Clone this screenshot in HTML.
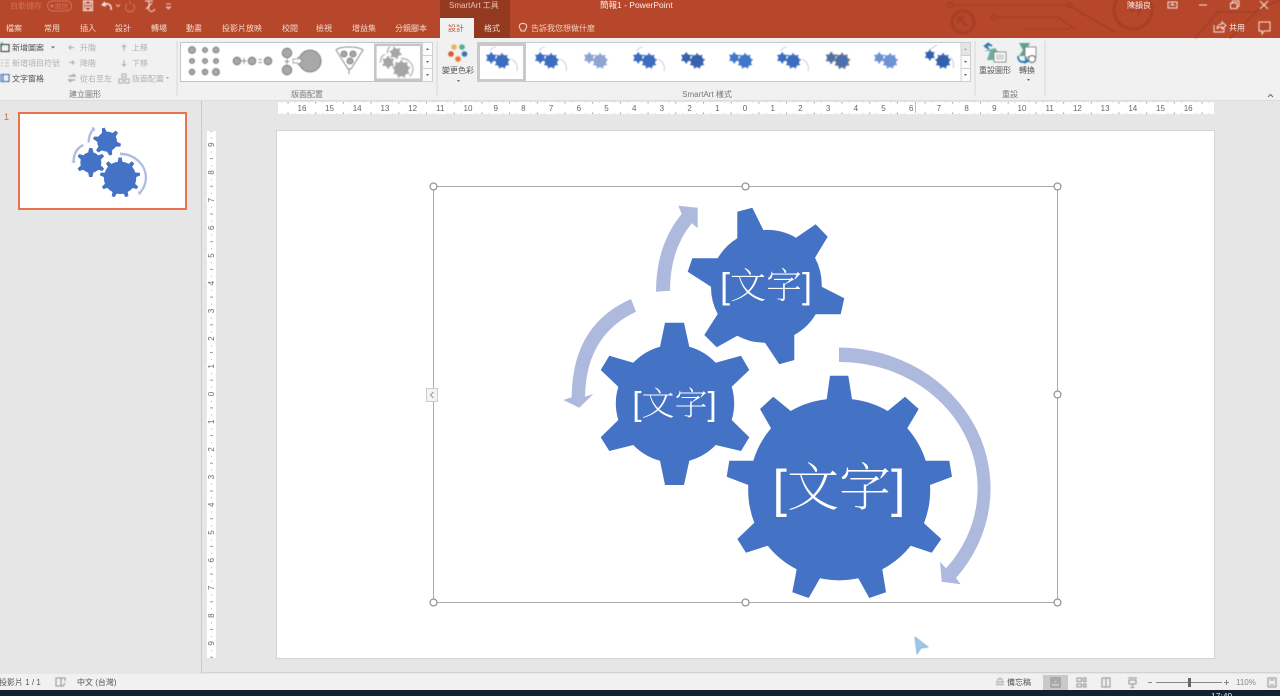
<!DOCTYPE html>
<html lang="zh-Hant">
<head>
<meta charset="utf-8">
<title>簡報1 - PowerPoint</title>
<style>
html,body{margin:0;padding:0;width:1280px;height:696px;overflow:hidden;background:#e6e6e6}
svg{display:block;position:absolute;left:0;top:0}
text{font-family:"Liberation Sans","Noto Sans CJK TC",sans-serif;font-size:8px;fill:#555;filter:blur(.3px)}
.tab{fill:#f3d9d0;text-anchor:middle}
.dis{fill:#b2b2b2}
.lab{fill:#777;text-anchor:middle}
.hr{font-size:8px;fill:#666;text-anchor:middle}
text.big{font-family:"Liberation Sans","Noto Serif CJK SC","Noto Sans CJK TC",serif;font-weight:200;fill:#fff;text-anchor:middle;filter:none}
.soft{filter:blur(.45px)}
</style>
</head>
<body>
<svg width="1280" height="696" viewBox="0 0 1280 696" xmlns="http://www.w3.org/2000/svg">
<defs>
<path id="g1" d="M737.3,238.3 L737.3,211.7 L752.3,207.7 L763.3,230 A57,57 0 0 1 796,237.7 L815.7,224.3 L827.7,236.7 L815,257.7 A57,57 0 0 1 821.7,286.7 L844.3,298.3 L840.7,314.3 L815.7,314.3 A57,57 0 0 1 794.3,335 L794.3,360 L779.3,364.3 L765,342.7 A57,57 0 0 1 737.3,335.7 L716.7,347.3 L704.3,335 L717.7,314 A57,57 0 0 1 711,286.7 L687.7,271.7 L692.3,258.3 L717.7,258.3 A57,57 0 0 1 737.3,238.3 Z"/>
<path id="g2" d="M660,346.7 L665,322.7 L684,322.7 L689.3,346.7 A58,58 0 0 1 715.7,362.7 L741,355.7 L749.3,370 L731.7,386.7 A58,58 0 0 1 731.7,420 L749.3,437.3 L741,451 L715.7,445 A58,58 0 0 1 689.3,460.7 L684,485 L665,485 L660,460.7 A58,58 0 0 1 633.3,445 L609.3,451 L600.7,437.3 L618.3,420 A58,58 0 0 1 618.3,386.7 L600.7,370 L609.3,355.7 L633.3,362.7 A58,58 0 0 1 660,346.7 Z"/>
<path id="g3" d="M826.7,399.3 L830,375.7 L848.3,375.7 L852,399.3 A91,91 0 0 1 887.7,411 L905,396.7 L918.7,409 L907.3,428.3 A91,91 0 0 1 925.7,460.7 L949.3,460.7 L952,476.7 L930,485 A91,91 0 0 1 924,523.3 L941.3,539 L931.7,552.7 L910.7,545.7 A91,91 0 0 1 882.3,569.3 L886,592.3 L869.3,598 L858.3,578.3 A91,91 0 0 1 820,578.3 L808.7,598 L792.3,592.3 L796.7,569.3 A91,91 0 0 1 767.7,545.7 L746,552.7 L737.3,539 L754.3,522.7 A91,91 0 0 1 748.3,485 L726.7,476.7 L729.3,460.7 L753.3,460.7 A91,91 0 0 1 771,428.3 L760,409 L773.3,396.7 L790.7,411 A91,91 0 0 1 826.7,399.3 Z"/>
<path id="a1" d="M839,347.5 A152,141 0 0 1 956,578 L960.7,584.3 L941.7,581.7 L940,561.7 L946,568.3 A138,126 0 0 0 839,362 Z"/>
<path id="a2" d="M656,291.7 Q656,245 681.7,214 L678.3,205.7 L697.7,207.7 L697.7,228.3 L691.7,223.3 Q670,250 670,290.7 Z"/>
<path id="a3" d="M631,299 Q572,325 571.7,397.3 L563.3,400 L579.3,407.7 L593.3,394 L585,396.7 Q586,335 636,311.7 Z"/>
<pattern id="rh" x="745" y="0" width="27.7" height="12" patternUnits="userSpaceOnUse">
<rect x="6.7" y="5.5" width="1" height="1" fill="#aaa"/>
<rect x="13.4" y="4.500" width="1" height="3" fill="#999"/>
<rect x="20.4" y="5.5" width="1" height="1" fill="#aaa"/>
</pattern>
<pattern id="rv" x="0" y="394" width="12" height="27.7" patternUnits="userSpaceOnUse">
<rect x="4.5" y="6.7" width="1" height="1" fill="#aaa"/>
<rect x="3.500" y="13.4" width="3" height="1" fill="#999"/>
<rect x="4.5" y="20.4" width="1" height="1" fill="#aaa"/>
</pattern>
</defs>

<!-- backgrounds -->
<rect width="1280" height="696" fill="#e6e6e6"/>
<rect width="1280" height="38" fill="#b7472a"/>
<rect x="440" y="0" width="70" height="38" fill="#93391f"/>
<rect x="440" y="18" width="34" height="20" fill="#f1f1f1"/>
<rect y="38" width="1280" height="62" fill="#f1f1f1"/>
<rect y="100" width="1280" height="1" fill="#dcdcdc"/>

<!-- circuit decoration -->
<g fill="none" stroke="#a53f25" stroke-width="1.6" class="soft">
<path d="M953,5 H1068 L1115,32"/>
<circle cx="950" cy="5" r="2.5"/>
<circle cx="1069" cy="5" r="2.5"/>
<circle cx="963" cy="22" r="11" stroke-width="3"/>
<path d="M958,17 L967,26 M958,17 H964 M958,17 V23" stroke-width="2.5"/>
<circle cx="1133" cy="10" r="19" stroke-width="3"/>
<path d="M1127,4 L1133,12 M1139,2 V14" stroke-width="3"/>
<path d="M996,17 H1058 L1075,29"/>
<circle cx="994" cy="17" r="2.5"/>
<path d="M1025,29 H1070"/>
<path d="M1195,38 L1218,12 H1255 L1280,0"/>
<path d="M1230,38 L1260,8"/>
</g>

<!-- QAT -->
<text x="10" y="8.500" style="fill:#cf6f55">自動儲存</text>
<rect x="47.5" y="1" width="24" height="10" rx="5" fill="none" stroke="#cf6f55"/>
<circle cx="52" cy="6" r="1.6" fill="#cf6f55"/>
<text x="55" y="8.500" style="fill:#cf6f55;font-size:6.5px">關閉</text>
<g fill="none" stroke="#f4e4de" stroke-width="1.2" class="soft">
<path d="M83.5,1 H92.5 V10.5 H83.5 Z M85.5,1 V4.5 H90.5 V1 M85.5,10.5 V7 H90.5 V10.5"/>
<path d="M105,2 L102.5,5 L106,6 M103,5 C107,2.5 112,4 111,10" stroke-width="1.6"/>
<path d="M116,4.5 l2,2 l2,-2" stroke-width="0.8"/>
<path d="M127,4 A4.5,4.5 0 1 0 133,4 M130,1 V4" stroke="#cf6f55"/>
<path d="M145,1 H153 M149,1 V8 M146,9 L152,3" stroke-width="1"/>
<path d="M148,8 C150,13 153,12 155,9" stroke-width="1"/>
<path d="M166,4 H171 M166.5,7 H170.5 L168.5,9 Z" stroke-width="0.8"/>
</g>

<!-- title -->
<text x="449" y="8" style="fill:#e9c4b8">SmartArt 工具</text>
<text x="600" y="8" style="fill:#fbeee9;font-size:8.5px">簡報1  -  PowerPoint</text>
<text x="1127" y="8" style="fill:#f7e9e4">陳韻良</text>
<g fill="none" stroke="#f4e4de" stroke-width="1" class="soft">
<rect x="1168" y="2" width="9" height="6"/><path d="M1170,5 H1175 M1172.5,2 V5"/>
<path d="M1199,5 H1207"/>
<path d="M1230.5,3 H1237 V8.5 H1230.5 Z M1232.5,3 V1 H1239 V6.5 H1237"/>
<path d="M1260,1 L1268,9 M1268,1 L1260,9"/>
<path d="M1214,25 V32 H1224 V28 M1217,29 C1217,25 1220,24 1222,24 V22 L1226,25.5 L1222,29 V27 C1220,27 1218,27.5 1217,29" />
<path d="M1259,22 H1270 V31 H1264 L1262,34 V31 H1259 Z"/>
</g>
<text x="1229" y="30.5" style="fill:#f7e9e4">共用</text>

<!-- tabs -->
<text class="tab" x="14" y="31">檔案</text>
<text class="tab" x="52" y="31">常用</text>
<text class="tab" x="88" y="31">插入</text>
<text class="tab" x="123" y="31">設計</text>
<text class="tab" x="159" y="31">轉場</text>
<text class="tab" x="194" y="31">動畫</text>
<text class="tab" x="242" y="31">投影片放映</text>
<text class="tab" x="290" y="31">校閱</text>
<text class="tab" x="324" y="31">檢視</text>
<text class="tab" x="364" y="31">增益集</text>
<text class="tab" x="411" y="31">分鏡腳本</text>
<text class="tab" x="456" y="31" style="fill:#c2583c">設計</text>
<text class="tab" x="492" y="31">格式</text>
<g fill="none" stroke="#f3d9d0" stroke-width="1"><path d="M521,31 V29.5 C518,27 519,23.5 523,23.5 C527,23.5 528,27 525,29.5 V31 Z"/></g>
<text x="531" y="31" style="fill:#f0cdc1">告訴我您想做什麼</text>

<!-- Create graphic group -->
<g fill="none" stroke-width="1" class="soft">
<rect x="1" y="44.5" width="8" height="7" stroke="#333"/><path d="M2,42 V46 M0,44 H4" stroke="#3a9a6a"/>
<path d="M1,60 H3 M1,63 H3 M1,66 H3 M5,60 H9 M5,63 H9 M5,66 H9" stroke="#bbb"/>
<rect x="1" y="74.5" width="8" height="7" stroke="#2f6db5"/><path d="M3,75 V81" stroke="#2f6db5"/>
<path d="M74,47.5 H69 M71,45.5 L69,47.5 L71,49.5" stroke="#aaa"/>
<path d="M69,62.5 H74 M72,60.5 L74,62.5 L72,64.5" stroke="#aaa"/>
<path d="M69,76 H75 L73,74 M75,80 H69 L71,82" stroke="#999" stroke-width="1.2"/>
<path d="M124,51 V45 M122,47 L124,45 L126,47" stroke="#aaa"/>
<path d="M124,60 V66 M122,64 L124,66 L126,64" stroke="#aaa"/>
<path d="M122,74 H126 V77 H122 Z M119,79 H123 V83 H119 Z M125,79 H129 V83 H125 Z" stroke="#aaa"/>
</g>
<text x="12" y="50.5">新增圖案</text>
<path d="M51,46.5 l2,2 l2,-2 Z" fill="#666"/>
<text x="12" y="66" class="dis">新增項目符號</text>
<text x="12" y="81.5">文字窗格</text>
<text x="80" y="50.5" class="dis">升階</text>
<text x="80" y="66" class="dis">降階</text>
<text x="80" y="81.5" class="dis">從右至左</text>
<text x="132" y="50.5" class="dis">上移</text>
<text x="132" y="66" class="dis">下移</text>
<text x="132" y="81.5" class="dis">版面配置</text>
<path d="M166,77 l1.5,2 l1.5,-2 Z" fill="#aaa"/>
<text class="lab" x="85" y="97">建立圖形</text>

<path d="M177,41 V96 M437,41 V96 M975,41 V96 M1045,41 V96" stroke="#d8d8d8"/>

<!-- layout gallery -->
<rect x="180.500" y="42.500" width="252" height="39" fill="#fff" stroke="#c4c4c4"/>
<g class="soft">
<g fill="#a8a8a8" stroke="#6e6e6e" stroke-width="0.8">
<circle cx="192" cy="50" r="3.5"/><circle cx="205" cy="50" r="2.5"/><circle cx="216" cy="50" r="3"/>
<circle cx="192" cy="61" r="2.5"/><circle cx="205" cy="61" r="2.500"/><circle cx="216" cy="61" r="2.500"/>
<circle cx="192" cy="72" r="2.8"/><circle cx="205" cy="72" r="2.800"/><circle cx="216" cy="72" r="3.500"/>
<circle cx="237" cy="61" r="3.800"/><circle cx="252" cy="61" r="3.800"/><circle cx="268" cy="61" r="3.800"/>
<circle cx="287" cy="53" r="4.800"/><circle cx="287" cy="70" r="4.800"/><circle cx="310" cy="61" r="11"/>
<circle cx="344" cy="54" r="3"/><circle cx="353" cy="54" r="3"/><circle cx="350" cy="61" r="3"/>
</g>
<path d="M336,50 C340,46 358,46 363,50 L351,69 H348 Z M349,69 V74" fill="none" stroke="#8a8a8a"/>
<path d="M244,58 V64 M241,61 H247 M258.500,59.500 H262 M258.500,62.500 H262 M287,59 V64 M284.500,61.500 H289.500" stroke="#777" stroke-width="0.8"/>
<path d="M293,59 H298 V57 L302,61 L298,65 V63 H293 Z" fill="#fff" stroke="#8a8a8a" stroke-width="0.7"/>
</g>
<rect x="375.300" y="44.800" width="46" height="35" fill="#fff" stroke="#c6c6c6" stroke-width="2.600"/>
<g fill="#a5a5a5" class="soft">
<use href="#g1" transform="translate(379,46) scale(.08) translate(-560,-200)"/>
<use href="#g2" transform="translate(379,46) scale(.08) translate(-560,-200)"/>
<use href="#g3" transform="translate(379,46) scale(.08) translate(-560,-200)"/>
<use href="#a2" transform="translate(379,46) scale(.08) translate(-560,-200)"/>
<use href="#a3" transform="translate(379,46) scale(.08) translate(-560,-200)"/>
<use href="#a1" transform="translate(379,46) scale(.08) translate(-560,-200)"/>
</g>
<rect x="422.500" y="42.500" width="10" height="13" fill="#fbfbfb" stroke="#d0d0d0"/>
<rect x="422.500" y="55.500" width="10" height="13" fill="#fbfbfb" stroke="#d0d0d0"/>
<rect x="422.500" y="68.500" width="10" height="13" fill="#fbfbfb" stroke="#d0d0d0"/>
<path d="M426,50 l1.500,-2 l1.500,2 Z M426,61 l1.500,2 l1.500,-2 Z M426,74 l1.500,2 l1.500,-2 Z" fill="#666"/>
<text class="lab" x="307" y="97">版面配置</text>

<!-- change colors -->
<g class="soft">
<circle cx="454" cy="47" r="2.800" fill="#eeb25f"/><circle cx="462" cy="47" r="2.800" fill="#5eab8b"/>
<circle cx="451" cy="54" r="2.800" fill="#d9582e"/><circle cx="464.500" cy="54" r="2.800" fill="#3b75b0"/>
<circle cx="458" cy="59" r="2.800" fill="#ec7a2c"/>
</g>
<text x="458" y="73" style="text-anchor:middle">變更色彩</text>
<path d="M457,80 l1.500,2 l1.500,-2 Z" fill="#666"/>

<!-- style gallery -->
<rect x="477.500" y="42.500" width="493" height="39" fill="#fff" stroke="#c8c8c8"/>
<rect x="478.500" y="44.500" width="46" height="36" fill="#fff" stroke="#c9c9c9" stroke-width="3"/>
<g fill="#3d6dbf" class="soft">
<g transform="translate(486,52) scale(.07) translate(-600,-320)"><use href="#g2"/><use href="#g3" transform="translate(-10,-40) "/></g>
<g transform="translate(535,52) scale(.07) translate(-600,-320)"><use href="#g2"/><use href="#g3" transform="translate(-10,-40) "/></g>
<g transform="translate(584,52) scale(.07) translate(-600,-320)" fill="#8ea4d5"><use href="#g2"/><use href="#g3" transform="translate(-10,-40) "/></g>
<g transform="translate(633,52) scale(.07) translate(-600,-320)"><use href="#g2"/><use href="#g3" transform="translate(-10,-40) "/></g>
<g transform="translate(681,52) scale(.07) translate(-600,-320)" fill="#3862ad"><use href="#g2"/><use href="#g3" transform="translate(-10,-40) "/></g>
<g transform="translate(729,52) scale(.07) translate(-600,-320)" fill="#4077c9"><use href="#g2"/><use href="#g3" transform="translate(-10,-40) "/></g>
<g transform="translate(777,52) scale(.07) translate(-600,-320)" fill="#3d6dbf"><use href="#g2"/><use href="#g3" transform="translate(-10,-40) "/></g>
<g transform="translate(826,52) scale(.07) translate(-600,-320)" fill="#4a6fae" stroke="#8a8a8a" stroke-width="10"><use href="#g2"/><use href="#g3" transform="translate(-10,-40) "/></g>
<g transform="translate(874,52) scale(.07) translate(-600,-320)" fill="#6f92d6"><use href="#g2"/><use href="#g3" transform="translate(-10,-40) "/></g>
<g transform="translate(927,52) scale(.07) translate(-600,-320)" fill="#3361ae"><use href="#g2" transform="translate(0,-20) scale(.95)"/><use href="#g3" transform="translate(-10,-40) "/></g>
</g>
<g fill="none" stroke="#b3bfdf" stroke-width="0.8" class="soft">
<path d="M490,51 A7,7 0 0 1 496,47 M511,59 A10,10 0 0 1 517,71"/>
<path d="M539,51 A7,7 0 0 1 545,47 M560,59 A10,10 0 0 1 566,71"/>
<path d="M637,51 A7,7 0 0 1 643,47 M658,59 A10,10 0 0 1 664,71"/>
<path d="M781,51 A7,7 0 0 1 787,47 M802,59 A10,10 0 0 1 808,71"/>
<path d="M929,50 L937,45 M950,57 A10,10 0 0 1 953,68"/>
</g>
<rect x="961" y="42.500" width="9.500" height="13" fill="#e4e4e4" stroke="#d0d0d0"/>
<rect x="961" y="55.500" width="9.500" height="13" fill="#fbfbfb" stroke="#d0d0d0"/>
<rect x="961" y="68.500" width="9.500" height="13" fill="#fbfbfb" stroke="#d0d0d0"/>
<path d="M964,50 l1.500,-2 l1.500,2 Z" fill="#aaa"/><path d="M964,61 l1.500,2 l1.500,-2 Z M964,74 l1.500,2 l1.500,-2 Z" fill="#666"/>
<text class="lab" x="707" y="97">SmartArt 樣式</text>

<!-- reset group -->
<g class="soft">
<path d="M990,51 L984,51 L995,48 L1005,60 H987 Z" fill="#6fae9d"/>
<rect x="994" y="52" width="12" height="10" fill="#fff" stroke="#777" stroke-width="0.8"/>
<path d="M996,55 H1004 M996,57 H1004 M996,59 H1004" stroke="#999" stroke-width="0.7"/>
<path d="M992,46 C988,43 986,46 986,48 M989,43 L985,46 L989,49" fill="none" stroke="#2b78b8" stroke-width="2"/>
<path d="M1019,43 H1030 L1026,50 H1031 L1027,56 H1019 L1023,50 Z" fill="#5ea38e"/>
<rect x="1025" y="47" width="11" height="10" fill="#fff" stroke="#777" stroke-width="0.8"/>
<circle cx="1032" cy="59" r="3.500" fill="#fff" stroke="#666"/>
<path d="M1018,56 C1018,62 1022,63 1027,61 M1025,58 L1028,61 L1024,63" fill="none" stroke="#2b78b8" stroke-width="1.800"/>
</g>
<text x="995" y="73" style="text-anchor:middle">重設圖形</text>
<text x="1027" y="73" style="text-anchor:middle">轉換</text>
<path d="M1027,79 l1.500,2 l1.500,-2 Z" fill="#666"/>
<text class="lab" x="1010" y="97">重設</text>
<path d="M1268,97 L1270.500,94.500 L1273,97" fill="none" stroke="#666"/>

<!-- panes -->
<rect x="201" y="101" width="1" height="572" fill="#c9c9c9"/>
<rect x="202" y="672" width="1078" height="1" fill="#d2d2d2"/>
<text x="4" y="120" style="fill:#d8623f;font-size:9px">1</text>
<rect x="19" y="113" width="167" height="96" fill="#fff" stroke="#e8744f" stroke-width="2"/>
<g transform="translate(20,114) scale(.178) translate(-277,-131)" class="soft">
<g fill="#b0bde0"><use href="#a1"/><use href="#a2"/><use href="#a3"/></g>
<g fill="#4472c4"><use href="#g1"/><use href="#g2"/><use href="#g3"/></g>
</g>

<!-- rulers -->
<rect x="278" y="102" width="936" height="12" fill="#fff"/>
<rect x="278" y="102" width="936" height="12" fill="url(#rh)"/>
<g>
<rect x="915" y="102" width="1" height="11" fill="#bbb"/>
<text class="hr" x="302" y="111" paint-order="stroke" stroke="#fff" stroke-width="3">16</text>
<text class="hr" x="329.500" y="111" paint-order="stroke" stroke="#fff" stroke-width="3">15</text>
<text class="hr" x="357.200" y="111" paint-order="stroke" stroke="#fff" stroke-width="3">14</text>
<text class="hr" x="384.900" y="111" paint-order="stroke" stroke="#fff" stroke-width="3">13</text>
<text class="hr" x="412.600" y="111" paint-order="stroke" stroke="#fff" stroke-width="3">12</text>
<text class="hr" x="440.300" y="111" paint-order="stroke" stroke="#fff" stroke-width="3">11</text>
<text class="hr" x="468" y="111" paint-order="stroke" stroke="#fff" stroke-width="3">10</text>
<text class="hr" x="495.700" y="111" paint-order="stroke" stroke="#fff" stroke-width="3">9</text>
<text class="hr" x="523.400" y="111" paint-order="stroke" stroke="#fff" stroke-width="3">8</text>
<text class="hr" x="551.100" y="111" paint-order="stroke" stroke="#fff" stroke-width="3">7</text>
<text class="hr" x="578.800" y="111" paint-order="stroke" stroke="#fff" stroke-width="3">6</text>
<text class="hr" x="606.500" y="111" paint-order="stroke" stroke="#fff" stroke-width="3">5</text>
<text class="hr" x="634.200" y="111" paint-order="stroke" stroke="#fff" stroke-width="3">4</text>
<text class="hr" x="661.900" y="111" paint-order="stroke" stroke="#fff" stroke-width="3">3</text>
<text class="hr" x="689.600" y="111" paint-order="stroke" stroke="#fff" stroke-width="3">2</text>
<text class="hr" x="717.300" y="111" paint-order="stroke" stroke="#fff" stroke-width="3">1</text>
<text class="hr" x="745" y="111" paint-order="stroke" stroke="#fff" stroke-width="3">0</text>
<text class="hr" x="772.700" y="111" paint-order="stroke" stroke="#fff" stroke-width="3">1</text>
<text class="hr" x="800.400" y="111" paint-order="stroke" stroke="#fff" stroke-width="3">2</text>
<text class="hr" x="828.100" y="111" paint-order="stroke" stroke="#fff" stroke-width="3">3</text>
<text class="hr" x="855.800" y="111" paint-order="stroke" stroke="#fff" stroke-width="3">4</text>
<text class="hr" x="883.500" y="111" paint-order="stroke" stroke="#fff" stroke-width="3">5</text>
<text class="hr" x="911.200" y="111" paint-order="stroke" stroke="#fff" stroke-width="3">6</text>
<text class="hr" x="938.900" y="111" paint-order="stroke" stroke="#fff" stroke-width="3">7</text>
<text class="hr" x="966.600" y="111" paint-order="stroke" stroke="#fff" stroke-width="3">8</text>
<text class="hr" x="994.300" y="111" paint-order="stroke" stroke="#fff" stroke-width="3">9</text>
<text class="hr" x="1022" y="111" paint-order="stroke" stroke="#fff" stroke-width="3">10</text>
<text class="hr" x="1049.700" y="111" paint-order="stroke" stroke="#fff" stroke-width="3">11</text>
<text class="hr" x="1077.400" y="111" paint-order="stroke" stroke="#fff" stroke-width="3">12</text>
<text class="hr" x="1105.100" y="111" paint-order="stroke" stroke="#fff" stroke-width="3">13</text>
<text class="hr" x="1132.800" y="111" paint-order="stroke" stroke="#fff" stroke-width="3">14</text>
<text class="hr" x="1160.500" y="111" paint-order="stroke" stroke="#fff" stroke-width="3">15</text>
<text class="hr" x="1188.200" y="111" paint-order="stroke" stroke="#fff" stroke-width="3">16</text>
</g>
<rect x="207" y="131" width="9" height="527" fill="#fff"/>
<g transform="translate(206.500,0)"><rect x="0" y="131" width="10" height="527" fill="url(#rv)"/></g>
<g>
<text class="hr" transform="translate(214,144.700) rotate(-90)" paint-order="stroke" stroke="#fff" stroke-width="3">9</text>
<text class="hr" transform="translate(214,172.400) rotate(-90)" paint-order="stroke" stroke="#fff" stroke-width="3">8</text>
<text class="hr" transform="translate(214,200.100) rotate(-90)" paint-order="stroke" stroke="#fff" stroke-width="3">7</text>
<text class="hr" transform="translate(214,227.800) rotate(-90)" paint-order="stroke" stroke="#fff" stroke-width="3">6</text>
<text class="hr" transform="translate(214,255.500) rotate(-90)" paint-order="stroke" stroke="#fff" stroke-width="3">5</text>
<text class="hr" transform="translate(214,283.200) rotate(-90)" paint-order="stroke" stroke="#fff" stroke-width="3">4</text>
<text class="hr" transform="translate(214,310.900) rotate(-90)" paint-order="stroke" stroke="#fff" stroke-width="3">3</text>
<text class="hr" transform="translate(214,338.600) rotate(-90)" paint-order="stroke" stroke="#fff" stroke-width="3">2</text>
<text class="hr" transform="translate(214,366.300) rotate(-90)" paint-order="stroke" stroke="#fff" stroke-width="3">1</text>
<text class="hr" transform="translate(214,394) rotate(-90)" paint-order="stroke" stroke="#fff" stroke-width="3">0</text>
<text class="hr" transform="translate(214,421.700) rotate(-90)" paint-order="stroke" stroke="#fff" stroke-width="3">1</text>
<text class="hr" transform="translate(214,449.400) rotate(-90)" paint-order="stroke" stroke="#fff" stroke-width="3">2</text>
<text class="hr" transform="translate(214,477.100) rotate(-90)" paint-order="stroke" stroke="#fff" stroke-width="3">3</text>
<text class="hr" transform="translate(214,504.800) rotate(-90)" paint-order="stroke" stroke="#fff" stroke-width="3">4</text>
<text class="hr" transform="translate(214,532.500) rotate(-90)" paint-order="stroke" stroke="#fff" stroke-width="3">5</text>
<text class="hr" transform="translate(214,560.200) rotate(-90)" paint-order="stroke" stroke="#fff" stroke-width="3">6</text>
<text class="hr" transform="translate(214,587.900) rotate(-90)" paint-order="stroke" stroke="#fff" stroke-width="3">7</text>
<text class="hr" transform="translate(214,615.600) rotate(-90)" paint-order="stroke" stroke="#fff" stroke-width="3">8</text>
<text class="hr" transform="translate(214,643.300) rotate(-90)" paint-order="stroke" stroke="#fff" stroke-width="3">9</text>
</g>

<!-- slide -->
<rect x="276.500" y="130.500" width="938" height="528" fill="#fff" stroke="#d4d4d4"/>
<g fill="#aebadd"><use href="#a1"/><use href="#a2"/><use href="#a3"/></g>
<g fill="#4472c4"><use href="#g1"/><use href="#g2"/><use href="#g3"/></g>
<text class="big" x="766" y="298" style="font-size:36px">[文字]</text>
<text class="big" x="674.500" y="415" style="font-size:33px">[文字]</text>
<text class="big" x="839" y="506" style="font-size:52px">[文字]</text>

<!-- selection frame -->
<rect x="433.500" y="186.500" width="624" height="416" fill="none" stroke="#aaa"/>
<g fill="#fff" stroke="#808080">
<circle cx="433.500" cy="186.500" r="3.500"/><circle cx="745.500" cy="186.500" r="3.500"/><circle cx="1057.500" cy="186.500" r="3.500"/>
<circle cx="1057.500" cy="394.500" r="3.500"/><circle cx="433.500" cy="602.500" r="3.500"/>
<circle cx="745.500" cy="602.500" r="3.500"/><circle cx="1057.500" cy="602.500" r="3.500"/>
</g>
<rect x="426.500" y="388.500" width="11" height="13" fill="#f4f4f4" stroke="#ccc"/>
<path d="M433.500,392 L430.500,395 L433.500,398" fill="none" stroke="#999"/>
<path d="M915,637 L928,647 L921,648 L917,654 Z" fill="#9cc8e8" stroke="#6ea6d2" stroke-width="0.7" class="soft"/>

<!-- status bar -->
<rect y="674" width="1280" height="16" fill="#f1f1f1"/>
<rect y="690" width="1280" height="6" fill="#14222f"/>
<text x="-1" y="685">投影片 1 / 1</text>
<rect x="1043" y="675" width="25" height="15" fill="#c9c9c9"/>
<g fill="none" stroke="#777" stroke-width="0.8" class="soft">
<path d="M56,678 H61 V686 H56 Z M61,678 H65 V681 M61,686 H63 L65,683"/>
<path d="M996,682 H1004 M996,684.500 H1004 M997,680.500 L1000,678 L1003,680.500"/>
<rect x="1051" y="678" width="9" height="9"/><path d="M1053,680 H1058 V683 H1053 Z"/>
<path d="M1077,678 H1081.500 V681.500 H1077 Z M1083.500,678 H1086 V681.500 H1083.500 Z M1077,684 H1081.500 V687 H1077 Z M1083.500,684 H1086 V687 H1083.500 Z"/>
<path d="M1102,678 H1106 V687 H1102 Z M1106,678 H1110 V687 H1106 Z"/>
<path d="M1128,678 H1137 M1129,680 H1136 V684 H1129 Z M1132.500,684 V687 M1130.500,687.500 H1134.500"/>
<path d="M1268,678 H1276 V687 H1268 Z M1270,680 H1274 M1270,685 H1274"/>
</g>
<text x="77" y="685">中文 (台灣)</text>
<text x="1007" y="685">備忘稿</text>
<path d="M1148,682.500 H1152 M1156,682.500 H1222 M1224,682.500 H1229 M1226.500,680 V685" stroke="#888"/>
<rect x="1188" y="678" width="3" height="9" fill="#666"/>
<text x="1236" y="685" style="fill:#888">110%</text>
<text x="1211" y="699" style="fill:#d8dde2;font-size:8.500px">17:49</text>
</svg>
</body>
</html>
